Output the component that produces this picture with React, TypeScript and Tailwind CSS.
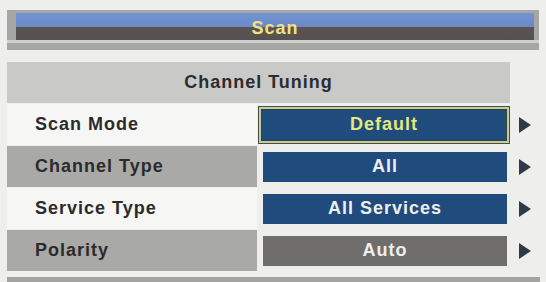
import React from 'react';

type Row = { label: string; value: string; shade: 'light' | 'dark'; kind: 'focus' | 'blue' | 'gray' };

const ROWS: Row[] = [
  { label: 'Scan Mode', value: 'Default', shade: 'light', kind: 'focus' },
  { label: 'Channel Type', value: 'All', shade: 'dark', kind: 'blue' },
  { label: 'Service Type', value: 'All Services', shade: 'light', kind: 'blue' },
  { label: 'Polarity', value: 'Auto', shade: 'dark', kind: 'gray' },
];

const font = { fontFamily: '"Liberation Sans", Arial, sans-serif' };

const ValueBox: React.FC<{ row: Row }> = ({ row }) => {
  if (row.kind === 'focus') {
    return (
      <div className="ml-[1px] w-[252px] h-[38px] border border-[#4a5040] bg-[#c3caa6] p-[2px]">
        <div className="h-full bg-[#1f4b7d] border border-[#35452f] flex items-center justify-center text-[18px] font-bold tracking-[1px] text-[#e6e87a]">
          {row.value}
        </div>
      </div>
    );
  }
  return (
    <div
      className={`ml-[6px] mr-[3px] w-[244px] h-[30px] flex items-center justify-center text-[18px] font-bold tracking-[1px] text-[#eeeeee] ${
        row.kind === 'blue' ? 'bg-[#1f4b7d]' : 'bg-[#6f6e6c]'
      }`}
    >
      {row.value}
    </div>
  );
};

export default function App() {
  return (
    <div className="w-[546px] h-[282px] overflow-hidden bg-[#eeefed] pt-[10px]" style={font}>
      {/* title bar */}
      <div className="ml-[7px] w-[532px] h-[40px] bg-[#a6a7a5] pt-[3px] pl-[9px] pr-[5px] flex flex-col">
        <div className="h-[27px] bg-[linear-gradient(to_bottom,#7394d4_0%,#6a89c6_50%,#5a5552_52%,#55504e_100%)] flex items-center justify-center pt-[3px]">
          <span className="text-[18px] font-bold tracking-[1px] text-[#f1e27e] leading-none">Scan</span>
        </div>
        <div className="h-[3px] bg-[#cfd0cd] -ml-[9px] -mr-[5px]" />
      </div>

      {/* section header */}
      <div className="mt-[12px] ml-[7px] w-[503px] h-[41px] bg-[#c9c9c8] flex items-center justify-center text-[18px] font-bold tracking-[1px] text-[#2c2c2c]">
        Channel Tuning
      </div>

      {/* rows */}
      <div className="mt-[1px] flex flex-col gap-[1px]">
        {ROWS.map((row) => (
          <div key={row.label} className="h-[41px] flex items-center">
            <div
              className={`ml-[7px] w-[250px] h-full flex items-center pl-[28px] text-[18px] font-bold tracking-[1px] text-[#2b2b2b] ${
                row.shade === 'light' ? 'bg-[#f6f6f5]' : 'bg-[#a9a9a8]'
              }`}
            >
              {row.label}
            </div>
            <ValueBox row={row} />
            <div className="ml-[9px] w-0 h-0 border-l-[12px] border-l-[#2e3a46] border-y-[8px] border-y-transparent" />
          </div>
        ))}
      </div>

      {/* footer strip */}
      <div className="mt-[6px] ml-[7px] w-[533px] h-[8px] bg-[#a3a3a2]" />
    </div>
  );
}
